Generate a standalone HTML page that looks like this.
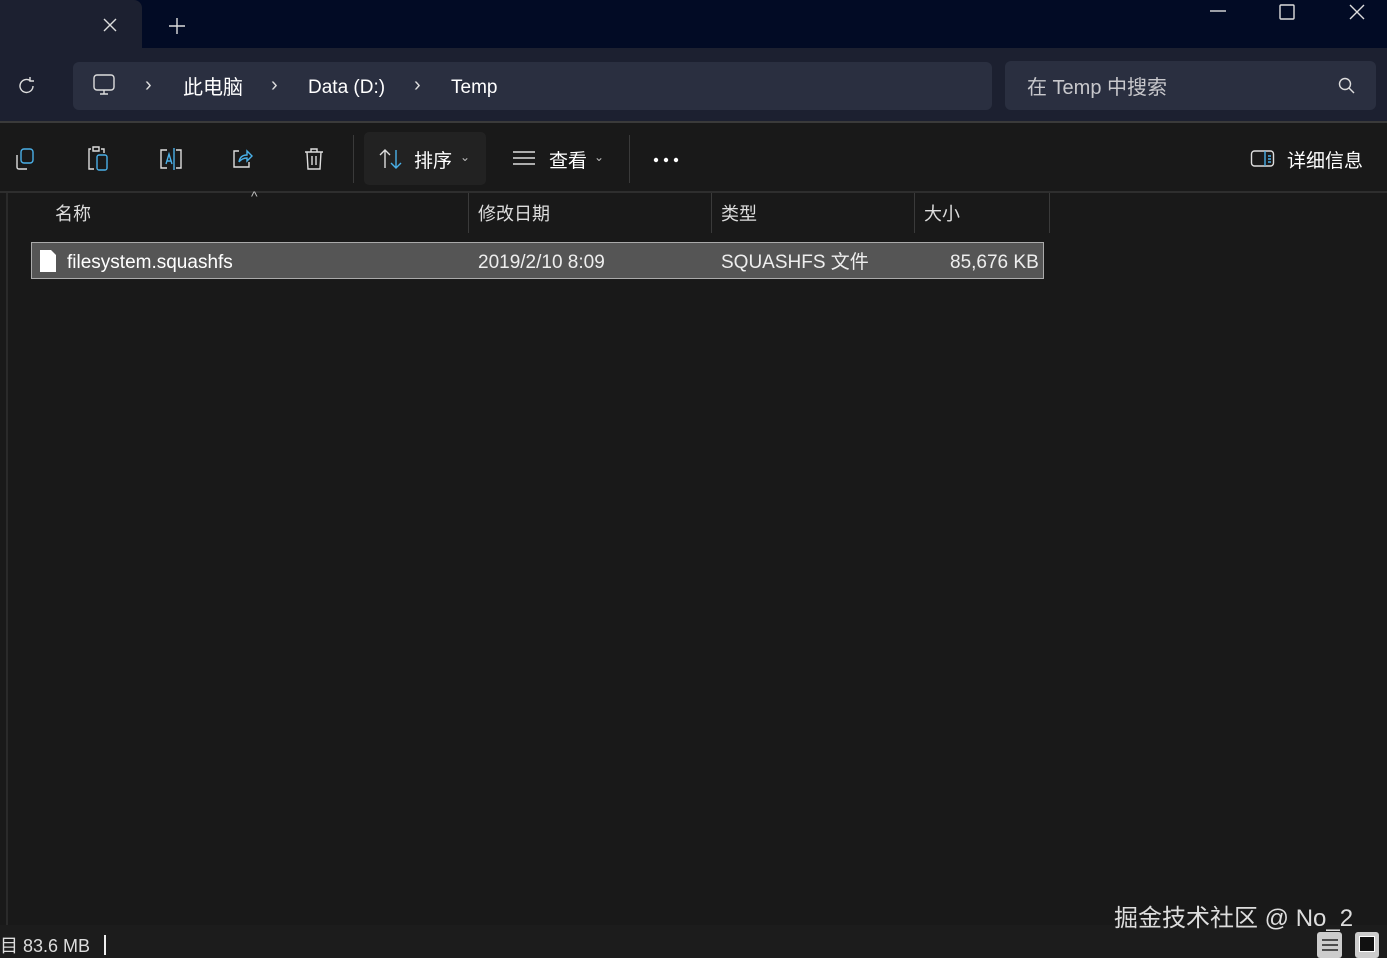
<!DOCTYPE html><html><head><meta charset="utf-8"><style>
*{margin:0;padding:0;box-sizing:border-box}
body{width:1387px;height:958px;overflow:hidden;background:#191919;font-family:"Liberation Sans","Noto Sans CJK SC",sans-serif;color:#fff;position:relative}
.a{position:absolute}
.t{position:absolute;white-space:nowrap}
svg{position:absolute;fill:none;stroke:#ddd;stroke-width:1.4}
</style></head><body>
<div class="a" style="left:0;top:0;width:1387px;height:50px;background:#020b25"></div>
<div class="a" style="left:0;top:0;width:142px;height:50px;background:#1c2030;border-top-right-radius:8px"></div>
<div class="a" style="left:0;top:48px;width:1387px;height:73px;background:#1c2030"></div>
<svg style="left:102px;top:17px" width="16" height="16"><path d="M2 2L14 14M14 2L2 14"/></svg>
<svg style="left:168px;top:17px" width="18" height="18"><path d="M9 1V17M1 9H17"/></svg>
<svg style="left:1208px;top:5px" width="20" height="12"><path d="M2 6H18"/></svg>
<svg style="left:1278px;top:3px" width="18" height="18"><rect x="2" y="2" width="14" height="14" rx="1"/></svg>
<svg style="left:1348px;top:3px" width="18" height="18"><path d="M2 2L16 16M16 2L2 16"/></svg>
<svg style="left:16px;top:75px" width="22" height="22"><path d="M17 11A6.5 6.5 0 1 1 14 5.5M14 2V6H18"/></svg>
<div class="a" style="left:73px;top:62px;width:919px;height:48px;background:#2a2f40;border-radius:6px"></div>
<svg style="left:92px;top:73px" width="24" height="24"><rect x="2" y="2" width="20" height="15" rx="3"/><path d="M8 21H16M12 17V21"/></svg>
<div class="t" style="left:145px;top:74px;font-size:20px;color:#ddd">›</div>
<div class="t" style="left:183px;top:71px;font-size:20px">此电脑</div>
<div class="t" style="left:271px;top:74px;font-size:20px;color:#ddd">›</div>
<div class="t" style="left:308px;top:77px;font-size:19px">Data (D:)</div>
<div class="t" style="left:414px;top:74px;font-size:20px;color:#ddd">›</div>
<div class="t" style="left:451px;top:77px;font-size:19px">Temp</div>
<div class="a" style="left:1005px;top:61px;width:371px;height:49px;background:#2a2f40;border-radius:6px"></div>
<div class="t" style="left:1027px;top:71px;font-size:20px;color:#c8c8cc">在 Temp 中搜索</div>
<svg style="left:1337px;top:76px" width="20" height="20"><circle cx="8" cy="8" r="5.5"/><path d="M12 12L17 17"/></svg>
<div class="a" style="left:0;top:121px;width:1387px;height:2px;background:#3a3a3a"></div>
<svg style="left:13px;top:147px;stroke:#4ab0e8" width="26" height="26"><rect x="8" y="2" width="12" height="14" rx="3"/><path d="M4 8V20Q4 22 6 22H14" style="stroke:#ddd"/></svg>
<svg style="left:85px;top:145px" width="26" height="28"><path d="M6 4H4V24H9M16 4H19V8M8 2H14V6H8Z"/><rect x="12" y="10" width="10" height="15" rx="2" style="stroke:#4ab0e8"/></svg>
<svg style="left:157px;top:146px" width="28" height="26"><path d="M10 4H4V22H10M19 4H24V22H19"/><path d="M9 18L12 8L15 18M10 15H14M17 2V24" style="stroke:#4ab0e8"/></svg>
<svg style="left:229px;top:146px" width="26" height="26"><path d="M10 5H5V21H20V16"/><path d="M10 16Q11 9 18 9V5L23 10L18 15V12Q13 12 10 16" style="stroke:#4ab0e8"/></svg>
<svg style="left:302px;top:146px" width="24" height="26"><path d="M3 6H21M9 6V3H15V6M5 6L6 23H18L19 6M10 10V19M14 10V19"/></svg>
<div class="a" style="left:353px;top:135px;width:1px;height:48px;background:#3a3a3a"></div>
<div class="a" style="left:364px;top:132px;width:122px;height:53px;background:#222;border-radius:5px"></div>
<svg style="left:378px;top:147px" width="26" height="24"><path d="M7 21V3M2 8L7 3L12 8"/><path d="M18 3V21M13 16L18 21L23 16" style="stroke:#4ab0e8"/></svg>
<div class="t" style="left:414px;top:146px;font-size:19px">排序</div>
<div class="t" style="left:460px;top:150px;font-size:12px;color:#bbb">⌄</div>
<svg style="left:511px;top:149px" width="26" height="20"><path d="M2 3H24M2 9H24M2 15H24"/></svg>
<div class="t" style="left:549px;top:146px;font-size:19px">查看</div>
<div class="t" style="left:594px;top:150px;font-size:12px;color:#bbb">⌄</div>
<div class="a" style="left:629px;top:135px;width:1px;height:48px;background:#3a3a3a"></div>
<svg style="left:652px;top:155px;fill:#fff;stroke:none" width="30" height="10"><circle cx="4" cy="5" r="2.2"/><circle cx="14" cy="5" r="2.2"/><circle cx="24" cy="5" r="2.2"/></svg>
<svg style="left:1250px;top:149px" width="26" height="20"><rect x="1.5" y="2" width="22" height="15" rx="3"/><path d="M15 2V17M18 7H21M18 10H21M18 13H21" style="stroke:#4ab0e8"/></svg>
<div class="t" style="left:1287px;top:146px;font-size:19px">详细信息</div>
<div class="a" style="left:0;top:191px;width:1387px;height:2px;background:#2e2e2e"></div>
<div class="a" style="left:6px;top:193px;width:2px;height:732px;background:#2a2a2a"></div>
<div class="t" style="left:251px;top:188px;font-size:14px;color:#bbb">^</div>
<div class="t" style="left:55px;top:200px;font-size:18px;color:#ddd">名称</div>
<div class="a" style="left:468px;top:193px;width:1px;height:40px;background:#3a3a3a"></div>
<div class="t" style="left:478px;top:200px;font-size:18px;color:#ddd">修改日期</div>
<div class="a" style="left:711px;top:193px;width:1px;height:40px;background:#3a3a3a"></div>
<div class="t" style="left:721px;top:200px;font-size:18px;color:#ddd">类型</div>
<div class="a" style="left:914px;top:193px;width:1px;height:40px;background:#3a3a3a"></div>
<div class="t" style="left:924px;top:200px;font-size:18px;color:#ddd">大小</div>
<div class="a" style="left:1049px;top:193px;width:1px;height:40px;background:#3a3a3a"></div>
<div class="a" style="left:31px;top:242px;width:1013px;height:37px;background:#555;border:1px solid #aaa"></div>
<svg style="left:39px;top:249px;fill:#fff;stroke:none" width="18" height="24"><path d="M1 1H12L17 6V23H1Z"/></svg>
<div class="t" style="left:67px;top:252px;font-size:19px">filesystem.squashfs</div>
<div class="t" style="left:478px;top:252px;font-size:19px;color:#eee">2019/2/10 8:09</div>
<div class="t" style="left:721px;top:247px;font-size:19px;color:#eee">SQUASHFS 文件</div>
<div class="t" style="left:950px;top:252px;font-size:19px;color:#eee">85,676 KB</div>
<div class="a" style="left:0;top:925px;width:1387px;height:33px;background:#1c1c1c"></div>
<div class="t" style="left:0;top:932px;font-size:18px;color:#ddd">目 83.6 MB</div>
<div class="a" style="left:104px;top:935px;width:2px;height:20px;background:#eee"></div>
<div class="t" style="left:1114px;top:898px;font-size:24px;color:#ddd">掘金技术社区 @ No_2</div>
<div class="a" style="left:1317px;top:932px;width:25px;height:26px;background:#ccc;border-radius:3px"></div>
<svg style="left:1320px;top:936px;stroke:#222" width="20" height="20"><path d="M2 4H18M2 9H18M2 14H18"/></svg>
<div class="a" style="left:1355px;top:932px;width:24px;height:26px;background:#ccc;border-radius:3px"></div>
<div class="a" style="left:1359px;top:936px;width:16px;height:16px;background:#111;border:1px solid #fff"></div>
</body></html>
